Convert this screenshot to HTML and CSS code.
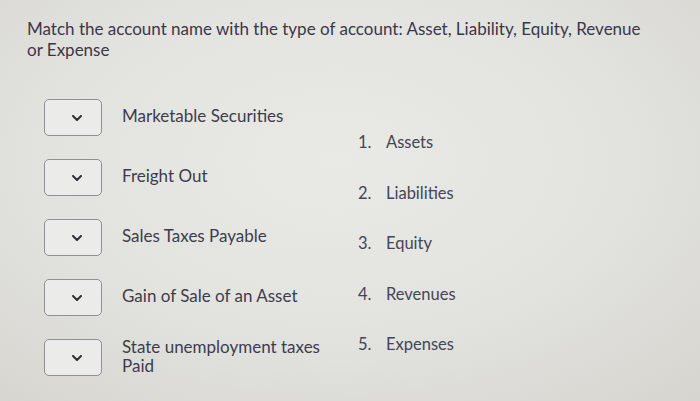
FILE: index.html
```html
<!DOCTYPE html>
<html lang="en">
<head>
<meta charset="utf-8">
<title>Match accounts</title>
<link rel="stylesheet" href="styles.css">
</head>
<body>
<main class="page">
  <p class="prompt">Match the account name with the type of account: Asset, Liability, Equity, Revenue or Expense</p>
  <div class="match">
    <div class="items">
      <div class="item">
        <div class="select"><svg class="chev" viewBox="0 0 10 6" width="10" height="6"><path d="M1 1 L5 5 L9 1" /></svg></div>
        <span class="label">Marketable Securities</span>
      </div>
      <div class="item">
        <div class="select"><svg class="chev" viewBox="0 0 10 6" width="10" height="6"><path d="M1 1 L5 5 L9 1" /></svg></div>
        <span class="label">Freight Out</span>
      </div>
      <div class="item">
        <div class="select"><svg class="chev" viewBox="0 0 10 6" width="10" height="6"><path d="M1 1 L5 5 L9 1" /></svg></div>
        <span class="label">Sales Taxes Payable</span>
      </div>
      <div class="item">
        <div class="select"><svg class="chev" viewBox="0 0 10 6" width="10" height="6"><path d="M1 1 L5 5 L9 1" /></svg></div>
        <span class="label">Gain of Sale of an Asset</span>
      </div>
      <div class="item">
        <div class="select"><svg class="chev" viewBox="0 0 10 6" width="10" height="6"><path d="M1 1 L5 5 L9 1" /></svg></div>
        <span class="label">State unemployment taxes<br>Paid</span>
      </div>
    </div>
    <ol class="types">
      <li><span class="num">1.</span><span>Assets</span></li>
      <li><span class="num">2.</span><span>Liabilities</span></li>
      <li><span class="num">3.</span><span>Equity</span></li>
      <li><span class="num">4.</span><span>Revenues</span></li>
      <li><span class="num">5.</span><span>Expenses</span></li>
    </ol>
  </div>
</main>
</body>
</html>
```

FILE: styles.css
```css
html, body {
  margin: 0;
  height: 100%;
}
body {
  background: radial-gradient(ellipse 75% 80% at 48% 40%, #e9eae6 0%, #e3e4e0 50%, #d7d5d0 100%);
  font-family: Lato, "Noto Sans", sans-serif;
  color: #3b3a48;
  overflow: hidden;
}
.page {
  padding: 18px 27px 0 27px;
}
.prompt {
  margin: 0;
  font-size: 17px;
  line-height: 21px;
  max-width: 630px;
  color: #3a374a;
}
.match {
  display: flex;
  margin-top: 39px;
}
.items {
  width: 331px;
  display: flex;
  flex-direction: column;
  gap: 23px;
}
.item {
  display: flex;
  align-items: center;
  gap: 20px;
  padding-left: 17px;
}
.select {
  width: 37px;
  height: 35px;
  border: 1px solid #8f8f95;
  border-radius: 5px;
  background: #ebecea;
  display: flex;
  align-items: center;
  justify-content: flex-end;
  padding-right: 19px;
  flex: none;
}
.chev {
  fill: none;
  stroke: #2f2f36;
  stroke-width: 2;
  stroke-linecap: round;
  stroke-linejoin: round;
}
.label {
  font-size: 17px;
  line-height: 19px;
  color: #3d3c4c;
  margin-top: -4px;
}
.types {
  list-style: none;
  margin: 33px 0 0 0;
  padding: 0;
  display: flex;
  flex-direction: column;
  gap: 30.5px;
  font-size: 16.5px;
  line-height: 20px;
  color: #454556;
}
.types li {
  display: flex;
}
.num {
  width: 28px;
}
```
